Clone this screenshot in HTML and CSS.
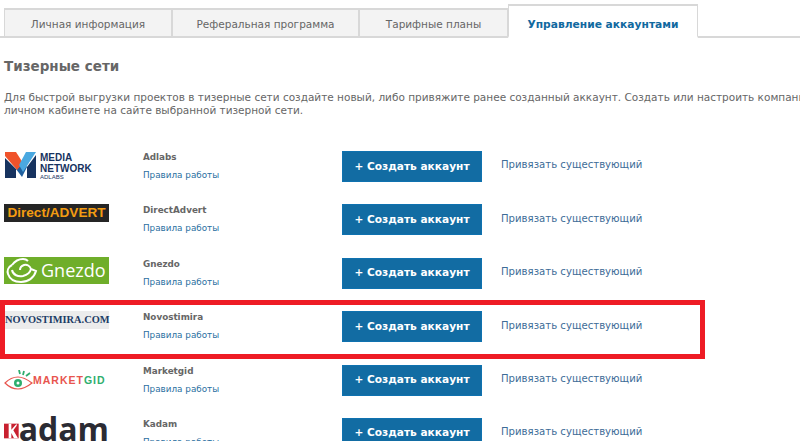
FILE: index.html
```html
<!DOCTYPE html>
<html lang="ru">
<head>
  <meta charset="UTF-8" />
  <title>Управление аккаунтами</title>
  <link rel="stylesheet" href="styles.css">
</head>
<body>
  <div class="page">
    <ul class="tabs">
      <li class="tab tab-1">Личная информация</li>
      <li class="tab tab-2">Реферальная программа</li>
      <li class="tab tab-3">Тарифные планы</li>
      <li class="tab tab-4 active">Управление аккаунтами</li>
    </ul>

    <h2>Тизерные сети</h2>
    <p class="intro">Для быстрой выгрузки проектов в тизерные сети создайте новый, либо привяжите ранее созданный аккаунт. Создать или настроить компании можно в<br>личном кабинете на сайте выбранной тизерной сети.</p>

    <div class="networks">
      <div class="row">
        <div class="logo logo-media">
          <svg width="31" height="26" viewBox="0 0 31 26">
            <path d="M11 17L17 25L22 15L19 11Z" fill="#1f5f9e"/>
            <path d="M0 0H11L18 11L12 18L0 4Z" fill="#f0532b"/>
            <path d="M0 6L11 17V26H0Z" fill="#17335f"/>
            <path d="M21 0H31L18 20L14 13Z" fill="#4aa8e0"/>
            <path d="M22 15L31 3V26H22Z" fill="#17335f"/>
          </svg>
          <div class="media-text">
            <b>MEDIA</b>
            <b>NETWORK</b>
            <span>ADLABS</span>
          </div>
        </div>
        <div class="info"><strong>Adlabs</strong><a href="#">Правила работы</a></div>
        <button class="create">+ Создать аккаунт</button>
        <a class="bind" href="#">Привязать существующий</a>
      </div>

      <div class="row">
        <div class="logo logo-direct">Direct/ADVERT</div>
        <div class="info"><strong>DirectAdvert</strong><a href="#">Правила работы</a></div>
        <button class="create">+ Создать аккаунт</button>
        <a class="bind" href="#">Привязать существующий</a>
      </div>

      <div class="row">
        <div class="logo logo-gnezdo">
          <svg width="33" height="27" viewBox="0 0 33 27" fill="none" stroke="#fff" stroke-width="2">
            <path d="M6 8C2 10 1 14 2 17C4 23 10 25 15 25C22 25 28 21 30 14L25 12C24 9 21 7 18 8C15 9 14 11 14 13"/>
            <path d="M6 8C9 4 13 2 17 2C19 2 21 3 22 4"/>
            <path d="M6 13C7 18 12 20 17 19C21 18 24 16 25 12"/>
          </svg>
          <span>Gnezdo</span>
        </div>
        <div class="info"><strong>Gnezdo</strong><a href="#">Правила работы</a></div>
        <button class="create">+ Создать аккаунт</button>
        <a class="bind" href="#">Привязать существующий</a>
      </div>

      <div class="row">
        <div class="logo logo-novo">NOVOSTIMIRA.COM</div>
        <div class="info"><strong>Novostimira</strong><a href="#">Правила работы</a></div>
        <button class="create">+ Создать аккаунт</button>
        <a class="bind" href="#">Привязать существующий</a>
      </div>

      <div class="row">
        <div class="logo logo-market">
          <svg width="29" height="22" viewBox="0 0 29 22" fill="none">
            <path d="M1 13C6 8 12 7 14 7C19 7 24 10 28 13C23 17 19 19 14 19C9 19 5 17 1 13Z" stroke="#e8554e" stroke-width="1.2"/>
            <circle cx="14" cy="13" r="4" fill="#2fae6e"/>
            <circle cx="14" cy="13" r="1.5" fill="#fff"/>
            <path d="M15 0L16 4M20 1L19 5M26 3L22 6" stroke="#2fae6e" stroke-width="1.8"/>
          </svg>
          <span>MARKET<em>GID</em></span>
        </div>
        <div class="info"><strong>Marketgid</strong><a href="#">Правила работы</a></div>
        <button class="create">+ Создать аккаунт</button>
        <a class="bind" href="#">Привязать существующий</a>
      </div>

      <div class="row">
        <div class="logo logo-kadam">
          <svg width="22" height="22" viewBox="0 0 22 22">
            <rect width="22" height="22" fill="#c8202f"/>
            <path d="M7 0H11V9L19 0V3L14 10L21 22H15L11 14V22H7Z" fill="#fff"/>
          </svg>
          <span>adam</span>
        </div>
        <div class="info"><strong>Kadam</strong><a href="#">Правила работы</a></div>
        <button class="create">+ Создать аккаунт</button>
        <a class="bind" href="#">Привязать существующий</a>
      </div>
    </div>

    <div class="highlight"></div>
  </div>
</body>
</html>
```

FILE: styles.css
```css
html, body {
  margin: 0;
  height: 441px;
  overflow: hidden;
  background: #fff;
}

body {
  font-family: "DejaVu Sans", Verdana, sans-serif;
  font-size: 10.5px;
  color: #666;
}

.page {
  position: relative;
  width: 800px;
  height: 441px;
  overflow: hidden;
}

.tabs {
  display: flex;
  align-items: flex-end;
  height: 38px;
  margin: 0;
  padding: 0 0 0 4px;
  list-style: none;
  box-sizing: border-box;
  border-bottom: 2px solid #d8d8d8;
}

.tab {
  height: 30px;
  margin-bottom: -2px;
  box-sizing: border-box;
  padding-top: 8px;
  text-align: center;
  font-size: 10.5px;
  color: #666;
  background: #f3f3f3;
  border: 2px solid #d8d8d8;
  border-left-width: 1px;
  border-right-width: 1px;
}

.tab-1 { width: 168px; }
.tab-2 { width: 187px; }
.tab-3 { width: 149px; }

.tab-4 {
  width: 190px;
  height: 34px;
  padding-top: 12px;
  font-size: 10.7px;
  font-weight: bold;
  color: #11699f;
  background: #fff;
  border-bottom: 2px solid #fff;
}

h2 {
  margin: 19px 0 0 4px;
  font-size: 13.5px;
  line-height: 18px;
  font-weight: bold;
  color: #666;
}

.intro {
  width: 900px;
  margin: 16px 0 0 4px;
  font-size: 10.5px;
  line-height: 13px;
  color: #666;
}

.networks {
  margin-top: 34px;
  display: flex;
  flex-direction: column;
}

.row {
  display: flex;
  align-items: flex-start;
  height: 53.4px;
  flex: none;
}

.logo {
  width: 105px;
  margin-left: 4px;
  flex: none;
  box-sizing: border-box;
}

.info {
  width: 199px;
  margin-left: 34px;
  flex: none;
  display: flex;
  flex-direction: column;
  gap: 6px;
}

.info strong {
  font-size: 8.8px;
  line-height: 12px;
  color: #666;
}

.info a {
  font-size: 8.8px;
  line-height: 12px;
  color: #2a6f9f;
  text-decoration: none;
}

.create {
  width: 140px;
  height: 31px;
  padding: 0 0 2px;
  flex: none;
  border: 1px solid #0f72b0;
  background: #126ca3;
  color: #fff;
  font-family: inherit;
  font-size: 10.6px;
  font-weight: bold;
}

.bind {
  margin: 8.4px 0 0 19px;
  font-size: 10.15px;
  color: #3d6c97;
  text-decoration: none;
}

.logo-media {
  display: flex;
  gap: 4px;
  height: 30px;
  margin-top: 1px;
  padding-left: 1px;
}

.media-text {
  display: flex;
  flex-direction: column;
  font-family: "Liberation Sans", sans-serif;
  color: #17335f;
  line-height: 11px;
  font-size: 10px;
}

.media-text span {
  font-size: 6px;
  line-height: 6px;
}

.logo-direct {
  height: 18px;
  background: #252525;
  color: #f39c12;
  font-family: "Liberation Sans", sans-serif;
  font-size: 13.6px;
  font-weight: bold;
  line-height: 18px;
  text-align: center;
  white-space: nowrap;
}

.logo-gnezdo {
  display: flex;
  align-items: center;
  gap: 2px;
  height: 27px;
  margin-top: -1px;
  padding-left: 2px;
  background: #6fae2a;
  color: #fff;
  font-family: "Open Sans", sans-serif;
  font-size: 18px;
}

.logo-novo {
  height: 18px;
  padding-left: 1px;
  background: #ececec;
  color: #1c3c66;
  font-family: "Liberation Serif", serif;
  font-size: 10.4px;
  font-weight: bold;
  line-height: 18px;
  white-space: nowrap;
}

.logo-market {
  display: flex;
  align-items: flex-end;
  height: 24px;
  margin-top: 3px;
  color: #e8554e;
  font-family: "Liberation Sans", sans-serif;
  font-size: 10.5px;
  font-weight: bold;
  letter-spacing: 1px;
}

.logo-market span { padding-bottom: 6px; }

.logo-market em {
  font-style: normal;
  color: #2fae6e;
}

.logo-kadam {
  display: flex;
  align-items: flex-start;
  height: 24px;
  margin-top: 2px;
  color: #2b2b33;
  font-family: "Open Sans", sans-serif;
  font-size: 32px;
  font-weight: 700;
  line-height: 18px;
}

.highlight {
  position: absolute;
  left: 0;
  top: 300px;
  width: 705px;
  height: 59px;
  box-sizing: border-box;
  border: 5px solid #ee1c25;
}
```
